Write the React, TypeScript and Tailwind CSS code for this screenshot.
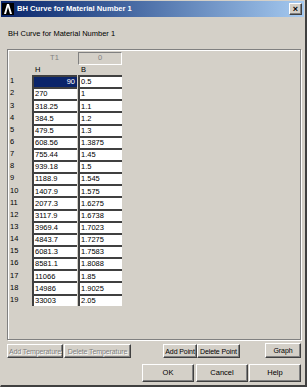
const ROWS: [string, string][] = [
  ['90', '0.5'],
  ['270', '1'],
  ['318.25', '1.1'],
  ['384.5', '1.2'],
  ['479.5', '1.3'],
  ['608.56', '1.3875'],
  ['755.44', '1.45'],
  ['939.18', '1.5'],
  ['1188.9', '1.545'],
  ['1407.9', '1.575'],
  ['2077.3', '1.6275'],
  ['3117.9', '1.6738'],
  ['3969.4', '1.7023'],
  ['4843.7', '1.7275'],
  ['6081.3', '1.7583'],
  ['8581.1', '1.8088'],
  ['11066', '1.85'],
  ['14986', '1.9025'],
  ['33003', '2.05'],
];

const raised =
  'border border-t-white border-l-white border-r-[#404040] border-b-[#404040] shadow-[inset_-1px_-1px_0_#808080] bg-[#d4d0c8] flex items-center justify-center whitespace-nowrap overflow-hidden';

function Btn({ label, className, disabled }: { label: string; className: string; disabled?: boolean }) {
  return (
    <div
      className={`${raised} ${className} ${disabled ? 'text-[#808080] [text-shadow:1px_1px_0_#fff]' : 'text-black'}`}
    >
      {label}
    </div>
  );
}

function AnsysIcon() {
  return (
    <svg width="12" height="12" viewBox="0 0 12 12">
      <rect width="12" height="12" fill="#000" />
      <polygon points="2,11 5,1 7,1 10,11 8,11 6,4 4,11" fill="#fff" />
    </svg>
  );
}

export default function App() {
  return (
    <div className="w-[307px] h-[387px] bg-[#d4d0c8] border-r-2 border-b-2 border-r-[#404040] border-b-[#404040] border-l border-l-[#d4d0c8] flex flex-col font-['Liberation_Sans',Arial,sans-serif] text-[7.5px] text-black leading-none overflow-hidden">
      {/* title bar */}
      <div className="h-[16px] mt-[1px] mr-[1px] flex items-center pl-[1px] pr-[2px] bg-gradient-to-r from-[#0a246a] to-[#a6caf0]">
        <AnsysIcon />
        <span className="ml-[3px] text-white font-bold text-[7.6px]">BH Curve for Material Number 1</span>
        <div className={`${raised} ml-auto w-[13px] h-[12px] text-[9px] font-bold`}>×</div>
      </div>

      <div className="mt-[12px] ml-[7px] h-[10px] flex items-center">BH Curve for Material Number 1</div>

      {/* table frame */}
      <div className="mt-[10px] ml-[6px] w-[294px] h-[291px] border border-[#808080] shadow-[inset_1px_1px_0_#fff,1px_1px_0_#fff] flex flex-col">
        <div className="h-[14px] flex items-center mt-[1px]">
          <div className="w-[24px]" />
          <div className="w-[45px] text-center text-[#808080]">T1</div>
          <div className="ml-[1px] w-[44px] h-[13px] border border-t-[#808080] border-l-[#808080] border-r-white border-b-white flex items-center justify-center text-[#808080]">
            0
          </div>
        </div>
        <div className="h-[10px] flex items-center">
          <div className="w-[24px]" />
          <div className="w-[46px] pl-[3px]">H</div>
          <div className="pl-[3px]">B</div>
        </div>
        <div className="flex flex-col">
          {ROWS.map(([h, b], i) => (
            <div key={i} className="h-[12.15px] flex">
              <div className="w-[24px] pl-[2px] flex items-center">{i + 1}</div>
              <div
                className={`w-[45px] border-t-2 border-l-2 border-[#404040] flex items-center ${
                  i === 0 ? 'bg-[#0a246a] text-white justify-end pr-[2px]' : 'bg-white pl-[1px]'
                }`}
              >
                {h}
              </div>
              <div className="w-[44px] ml-[1px] border-t-2 border-l-2 border-[#404040] bg-white flex items-center pl-[1px]">
                {b}
              </div>
            </div>
          ))}
        </div>
      </div>

      {/* button rows */}
      <div className="mt-[3px] h-[15px] flex items-end text-[7px] tracking-[-0.1px]">
        <Btn label="Add Temperature" disabled className="ml-[6px] w-[56px] h-[14px]" />
        <Btn label="Delete Temperature" disabled className="ml-[1px] w-[67px] h-[14px]" />
        <Btn label="Add Point" className="ml-[32px] w-[34px] h-[14px]" />
        <Btn label="Delete Point" className="w-[43px] h-[14px]" />
        <Btn label="Graph" className="ml-[25px] w-[36px] h-[15px]" />
      </div>
      <div className="mt-[6px] h-[18px] flex">
        <Btn label="OK" className="ml-[141px] w-[52px] h-[18px]" />
        <Btn label="Cancel" className="ml-[2px] w-[52px] h-[18px]" />
        <Btn label="Help" className="ml-[1px] w-[52px] h-[18px]" />
      </div>
    </div>
  );
}
